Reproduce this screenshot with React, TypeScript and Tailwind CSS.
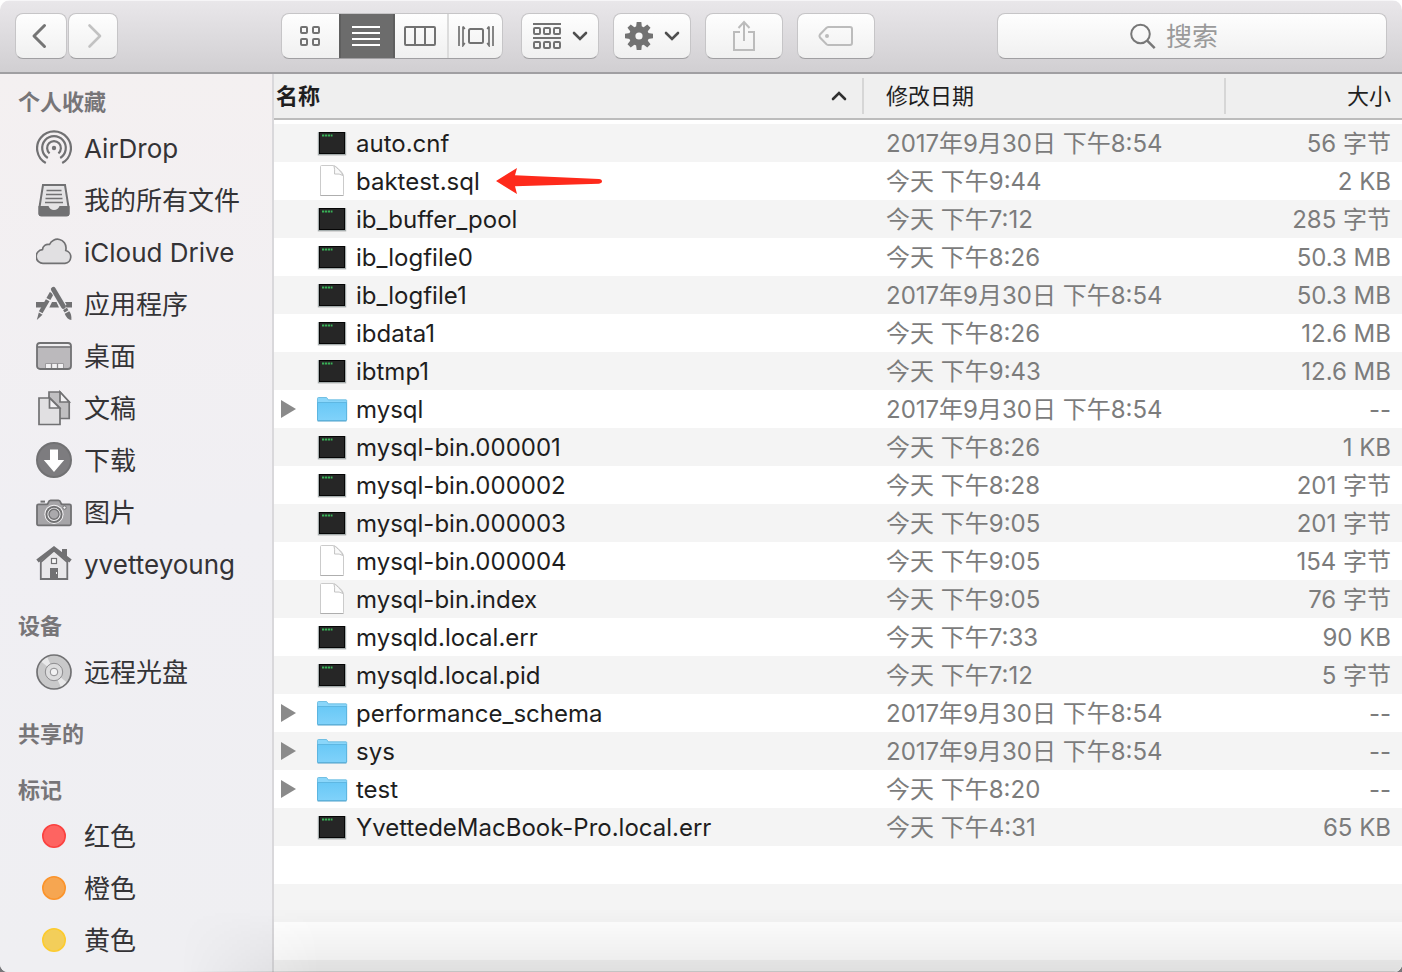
import React from "react";

const SANS = "font-['Inter','Noto_Sans_CJK_SC',sans-serif]";

type Kind = "exec" | "doc" | "folder";
type FileRow = { name: string; date: string; size: string; kind: Kind; marked?: boolean };

const files: FileRow[] = [
  { name: "auto.cnf", date: "2017年9月30日 下午8:54", size: "56 字节", kind: "exec" },
  { name: "baktest.sql", date: "今天 下午9:44", size: "2 KB", kind: "doc", marked: true },
  { name: "ib_buffer_pool", date: "今天 下午7:12", size: "285 字节", kind: "exec" },
  { name: "ib_logfile0", date: "今天 下午8:26", size: "50.3 MB", kind: "exec" },
  { name: "ib_logfile1", date: "2017年9月30日 下午8:54", size: "50.3 MB", kind: "exec" },
  { name: "ibdata1", date: "今天 下午8:26", size: "12.6 MB", kind: "exec" },
  { name: "ibtmp1", date: "今天 下午9:43", size: "12.6 MB", kind: "exec" },
  { name: "mysql", date: "2017年9月30日 下午8:54", size: "--", kind: "folder" },
  { name: "mysql-bin.000001", date: "今天 下午8:26", size: "1 KB", kind: "exec" },
  { name: "mysql-bin.000002", date: "今天 下午8:28", size: "201 字节", kind: "exec" },
  { name: "mysql-bin.000003", date: "今天 下午9:05", size: "201 字节", kind: "exec" },
  { name: "mysql-bin.000004", date: "今天 下午9:05", size: "154 字节", kind: "doc" },
  { name: "mysql-bin.index", date: "今天 下午9:05", size: "76 字节", kind: "doc" },
  { name: "mysqld.local.err", date: "今天 下午7:33", size: "90 KB", kind: "exec" },
  { name: "mysqld.local.pid", date: "今天 下午7:12", size: "5 字节", kind: "exec" },
  { name: "performance_schema", date: "2017年9月30日 下午8:54", size: "--", kind: "folder" },
  { name: "sys", date: "2017年9月30日 下午8:54", size: "--", kind: "folder" },
  { name: "test", date: "今天 下午8:20", size: "--", kind: "folder" },
  { name: "YvettedeMacBook-Pro.local.err", date: "今天 下午4:31", size: "65 KB", kind: "exec" },
];

/* ---------- file icons ---------- */

function FileIcon({ kind }: { kind: Kind }) {
  if (kind === "exec") {
    return (
      <svg width="32" height="32" viewBox="0 0 32 32" className="shrink-0" aria-hidden="true">
        <rect x="1.5" y="5" width="29" height="24" rx="1" fill="#000" opacity="0.12" />
        <rect x="2" y="5" width="28" height="23" fill="#8f9a9a" opacity="0.7" />
        <rect x="3" y="5" width="26" height="22" fill="#060606" />
        <rect x="4" y="6" width="24" height="20" fill="#262626" />
        <path d="M6 8.500h2.300M9 8.500h2.300M12 8.500h2.300M15 8.500h1.500" stroke="#38b257" strokeWidth="2" />
      </svg>
    );
  }
  if (kind === "doc") {
    return (
      <svg width="32" height="32" viewBox="0 0 32 32" className="shrink-0" aria-hidden="true">
        <path d="M4.500 30.500V1.500q0-1 1-1H17q3 .5 5.500 3.500Q27 7.500 27.500 10.500v19q0 1-1 1h-21q-1 0-1-1Z" fill="#fff" stroke="#cbcbcb" />
        <path d="M4.500 30.500h23" stroke="#aaa" strokeWidth="0.900" />
        <path d="M18 1q1 3.500.5 8 5-.6 8.500 1.500-.5-2-4.500-6T18 1Z" fill="#fafafa" stroke="#c4c4c4" strokeLinejoin="round" />
      </svg>
    );
  }
  return (
    <svg width="32" height="32" viewBox="0 0 32 32" className="shrink-0" aria-hidden="true">
      <defs>
        <linearGradient id="folder" x1="0" y1="0" x2="0" y2="1">
          <stop offset="0" stopColor="#69c8f6" />
          <stop offset="1" stopColor="#80d2fa" />
        </linearGradient>
      </defs>
      <path d="M1.500 27V5.500q0-1 1-1H10q1 0 1.500 1l.7 1.300H30q.7 0 .7.700V27Z" fill="#8ad6fa" stroke="#5db5dd" strokeWidth="0.800" />
      <path d="M1.500 9.500h29V27q0 .7-.7.700H2.200q-.7 0-.7-.7Z" fill="url(#folder)" stroke="#57b1dc" strokeWidth="0.800" />
      <path d="M1.500 28h29" stroke="#4a9dc6" strokeWidth="0.800" />
    </svg>
  );
}

function Arrow() {
  return (
    <svg width="106" height="26" viewBox="0 0 106 26" className="ml-4 shrink-0" aria-hidden="true">
      <path d="M0 13 21 0l-2 7.200L103 11q3 .3 3 2.300t-3 2.400L19 18.300 21 26Z" fill="#fe2a1b" />
    </svg>
  );
}

/* ---------- sidebar icons ---------- */

const G = "#717173";

const airdrop = (
  <g fill="none" stroke={G} strokeWidth="2.200">
    <path d="M9.800 33A16.900 16.900 0 1 1 26.200 33" />
    <path d="M11.800 28A11.800 11.800 0 1 1 24.200 28" />
    <path d="M13.600 23.300A6.900 6.900 0 1 1 22.400 23.300" />
    <circle cx="18" cy="18" r="2.200" fill={G} stroke="none" />
  </g>
);

const allFiles = (
  <g>
    <path d="M7 3h22l3.500 22v6.500q0 2-2 2h-25q-2 0-2-2V25Z" fill="#e4e3e5" stroke={G} strokeWidth="2" />
    <path d="M2.500 24h10q1.500 4 5.500 4t5.500-4h10v7.500q0 2.500-2.500 2.500H5q-2.500 0-2.500-2.500Z" fill={G} />
    <path d="M10.500 8.500h15M10 12.500h16M9.500 16.500h17M9 20.500h18" stroke={G} strokeWidth="1.600" />
  </g>
);

const cloud = (
  <path
    d="M7.500 29.300a6.800 6.800 0 0 1-1-13.600A5.600 5.600 0 0 1 13.500 10.500A8.600 8.600 0 0 1 30 14.500q0 1.200-.3 2A6.500 6.500 0 0 1 29 29.300Z"
    fill="#e1e0e2"
    stroke={G}
    strokeWidth="1.700"
    strokeLinejoin="round"
  />
);

const apps = (
  <g>
    <path d="M0 16h9.500l-2.800 5.500H0ZM16 16h4.500L23 21.500h-9.700ZM27.500 16H36v5.500h-5.500Z" fill={G} />
    <path d="m15.800 7-3.400 6" stroke={G} strokeWidth="4.500" />
    <path d="m11.700 14.300-7 12" stroke={G} strokeWidth="4.200" />
    <path d="m6.500 28.800L2.800 26.500 .8 34Z" fill={G} />
    <path d="m17.300 3L27.500 20.500" stroke="#efeef1" strokeWidth="7" />
    <path d="m17.300 3.300L27.500 20.500" stroke={G} strokeWidth="4.800" strokeLinecap="round" />
    <path d="m29 22.800 1.500 2.600" stroke={G} strokeWidth="4.500" />
    <path d="m28.700 27.800 4.500-2.500q2.500 2.500 2.200 8.700-4.500-.5-6.700-6.200Z" fill={G} />
  </g>
);

const desktop = (
  <g>
    <rect x="1" y="5" width="34" height="26" rx="3" fill="#bbb9bc" />
    <path d="M2 8.500V7q0-1.500 1.500-1.500h29Q34 5.500 34 7v1.500Z" fill="#efeef0" />
    <path d="M1 9h34" stroke={G} strokeWidth="1.600" />
    <rect x="1" y="5" width="34" height="26" rx="3" fill="none" stroke={G} strokeWidth="1.800" />
    <path d="M9.500 30v-4.500h18V30" fill="#f2f1f3" stroke="#9c9a9d" />
    <path d="M15.500 25.500V30M21.500 25.500V30" stroke="#8c8a8d" strokeWidth="1.300" />
  </g>
);

const documents = (
  <g stroke={G} strokeWidth="1.700">
    <path d="M13 2h11l9.200 10v16.500H13Z" fill="#c0bfc1" />
    <path d="M24 2v10h9.200Z" fill="#f3f2f4" />
    <path d="M3 8h11l10 10v16.500H3Z" fill="#e1e0e2" />
    <path d="M13.500 8v10h10Z" fill="#f3f2f4" />
  </g>
);

const downloads = (
  <g>
    <circle cx="18" cy="18" r="17" fill="#7d7c7f" stroke={G} strokeWidth="2" />
    <path d="M14 7.500h8V18h6.200L18 30 7.800 18H14Z" fill="#fff" />
  </g>
);

const pictures = (
  <g transform="translate(0 .8)">
    <path d="M4.500 6.800h4.500" stroke={G} strokeWidth="2" />
    <path d="M2.500 9.500h8q1.500 0 2-2 .5-2 2-2h8q1.500 0 2 2t2 2h7q1.500 0 1.500 1.500v18q0 1.500-1.500 1.500h-31Q1 30.500 1 29V11q0-1.500 1.500-1.500Z" fill="#a6a5a8" stroke={G} strokeWidth="1.800" />
    <circle cx="18" cy="19.500" r="9.600" fill="#f4f3f5" />
    <circle cx="18" cy="19.500" r="7.600" fill="#f4f3f5" stroke={G} strokeWidth="2" />
    <circle cx="18" cy="19.500" r="5" fill="#aaa9ac" stroke={G} strokeWidth="1.400" />
    <circle cx="28.500" cy="12.800" r="1.700" fill="#f3f2f4" stroke={G} />
  </g>
);

const home = (
  <g>
    <path d="M26 3h5v9l-5-4Z" fill={G} />
    <path d="M4.800 16v17h26.500V16L18 4.500Z" fill="#e9e8ea" stroke={G} strokeWidth="1.800" />
    <path d="M1.500 15 18 2.500l16.500 12.500" fill="none" stroke={G} strokeWidth="4" />
    <rect x="15.500" y="12.500" width="5" height="5" fill="#fafafa" stroke={G} strokeWidth="1.200" />
    <path d="M14 22h8v12h-8Z" fill={G} />
    <path d="M20.500 26v2" stroke="#eee" />
  </g>
);

const disc = (
  <g>
    <circle cx="18" cy="18" r="17" fill="#c9c9ca" />
    <path d="M18 18 5 7.500A17 17 0 0 1 11 2.800ZM18 18 31 28.500A17 17 0 0 1 25 33.200Z" fill="#e9e9ea" />
    <circle cx="18" cy="18" r="17" fill="none" stroke={G} strokeWidth="1.700" />
    <circle cx="18" cy="18" r="8.700" fill="#dcdcdd" stroke="#8d8c8f" />
    <circle cx="18" cy="18" r="3.800" fill="#f2f2f3" stroke="#8d8c8f" />
  </g>
);

const tag = (fill: string, stroke: string) => <circle cx="18" cy="18" r="11.200" fill={fill} stroke={stroke} strokeWidth="1.600" />;

type Item = { label: string; icon: React.ReactNode };
const sections: { title: string; items: Item[] }[] = [
  {
    title: "个人收藏",
    items: [
      { label: "AirDrop", icon: airdrop },
      { label: "我的所有文件", icon: allFiles },
      { label: "iCloud Drive", icon: cloud },
      { label: "应用程序", icon: apps },
      { label: "桌面", icon: desktop },
      { label: "文稿", icon: documents },
      { label: "下载", icon: downloads },
      { label: "图片", icon: pictures },
      { label: "yvetteyoung", icon: home },
    ],
  },
  { title: "设备", items: [{ label: "远程光盘", icon: disc }] },
  { title: "共享的", items: [] },
  {
    title: "标记",
    items: [
      { label: "红色", icon: tag("#fe6461", "#fb4240") },
      { label: "橙色", icon: tag("#f6a651", "#fb942c") },
      { label: "黄色", icon: tag("#f3ce5a", "#fccb2f") },
    ],
  },
];

function Sidebar() {
  return (
    <nav className="flex w-[274px] shrink-0 flex-col gap-4 overflow-hidden border-r-2 border-[#d9d8db] bg-linear-to-b from-[#f4f0f1] via-[#f0eff3] to-[#efeff2] pt-2">
      {sections.map((s) => (
        <section key={s.title}>
          <h2 className="flex h-10 items-center pl-[18px] text-[22px] font-bold text-[#777578]">{s.title}</h2>
          <ul>
            {s.items.map((it) => (
              <li key={it.label}>
                <a href="#" className="flex h-[52px] items-center gap-3 pl-9 text-[26px] text-[#343336]">
                  <svg width="36" height="36" viewBox="0 0 36 36" className="shrink-0" aria-hidden="true">
                    {it.icon}
                  </svg>
                  <span className="whitespace-nowrap">{it.label}</span>
                </a>
              </li>
            ))}
          </ul>
        </section>
      ))}
    </nav>
  );
}

/* ---------- toolbar ---------- */

const BTN =
  "flex h-[46px] items-center justify-center rounded-lg border border-[#c6c5c7] border-b-[#a09fa2] bg-linear-to-b from-[#fefefe] to-[#f0f0f0]";
const SEG = "flex items-center justify-center";

function Chevron() {
  return (
    <svg width="16" height="12" viewBox="0 0 16 12" fill="none" aria-hidden="true">
      <path d="m2 3 6 6 6-6" stroke="#4f4f4f" strokeWidth="2.600" strokeLinecap="round" />
    </svg>
  );
}

function Toolbar() {
  return (
    <header className="flex h-[74px] shrink-0 items-start border-t border-b-2 border-t-[#f6f5f7] border-b-[#a09fa2] bg-linear-to-b from-[#e9e7ea] to-[#d1cfd2] px-[15px] pt-3">
      <div className="flex gap-px">
        <button aria-label="后退" className={`${BTN} w-[52px]`}>
          <svg width="16" height="26" viewBox="0 0 16 26" fill="none" className="mr-1" aria-hidden="true">
            <path d="M13.500 2.500 3 13l10.500 10.500" stroke="#757575" strokeWidth="3" strokeLinecap="round" strokeLinejoin="round" />
          </svg>
        </button>
        <button aria-label="前进" className={`${BTN} w-[50px]`}>
          <svg width="16" height="26" viewBox="0 0 16 26" fill="none" className="ml-1" aria-hidden="true">
            <path d="M2.500 2.500 13 13 2.500 23.500" stroke="#c2c2c2" strokeWidth="2.600" strokeLinecap="round" strokeLinejoin="round" />
          </svg>
        </button>
      </div>

      <div className="ml-[163px] flex h-[46px] w-[222px] overflow-hidden rounded-lg border border-[#c6c5c7] border-b-[#a09fa2] bg-linear-to-b from-[#fefefe] to-[#f0f0f0]">
        <button aria-label="图标显示" className={`${SEG} w-[57px] pr-0.5`}>
          <svg width="22" height="22" viewBox="0 0 22 22" fill="none" stroke="#727272" strokeWidth="2" aria-hidden="true">
            <rect x="2" y="2" width="6" height="6" rx="1" />
            <rect x="14" y="2" width="6" height="6" rx="1" />
            <rect x="2" y="14" width="6" height="6" rx="1" />
            <rect x="14" y="14" width="6" height="6" rx="1" />
          </svg>
        </button>
        <button aria-label="列表显示" aria-pressed="true" className={`${SEG} -my-px w-14 border-2 border-y-0 border-[#5f5f5f] bg-[#6c6c6c] pr-0.5`}>
          <svg width="28" height="20" viewBox="0 0 28 20" stroke="#fff" strokeWidth="2" aria-hidden="true">
            <path d="M0 1h28M0 7h28M0 13h28M0 19h28" />
          </svg>
        </button>
        <button aria-label="分栏显示" className={`${SEG} w-[54px] border-r-2 border-[#dcdcdc] pr-0.5`}>
          <svg width="32" height="20" viewBox="0 0 32 20" fill="none" stroke="#727272" strokeWidth="2" aria-hidden="true">
            <rect x="1" y="1" width="30" height="18" rx="1" />
            <path d="M11 1v18M21 1v18" />
          </svg>
        </button>
        <button aria-label="Cover Flow" className={`${SEG} flex-1`}>
          <svg width="36" height="22" viewBox="0 0 36 22" fill="none" stroke="#727272" strokeWidth="1.700" aria-hidden="true">
            <path d="M1 1v20M35 1v20" />
            <path d="M5 1.500v19l1.800-2.500M31 1.500v19L29.200 18M5 1.500l1.800 2.500M31 1.500 29.200 4" />
            <rect x="11" y="4" width="14" height="14" rx="1.500" strokeWidth="2" />
          </svg>
        </button>
      </div>

      <div className="ml-[18px] flex gap-3.5">
        <button aria-label="排列" className={`${BTN} w-[78px] gap-2.5`}>
          <svg width="30" height="28" viewBox="0 0 30 28" fill="none" stroke="#727272" strokeWidth="2" aria-hidden="true">
            <path d="M1 2h28M1 16h28" />
            <rect x="2" y="6" width="6" height="6" rx="1" />
            <rect x="12" y="6" width="6" height="6" rx="1" />
            <rect x="22" y="6" width="6" height="6" rx="1" />
            <rect x="2" y="20" width="6" height="6" rx="1" />
            <rect x="12" y="20" width="6" height="6" rx="1" />
            <rect x="22" y="20" width="6" height="6" rx="1" />
          </svg>
          <Chevron />
        </button>
        <button aria-label="操作" className={`${BTN} w-[78px] gap-2.5`}>
          <svg width="30" height="30" viewBox="-15 -15 30 30" aria-hidden="true">
            <circle r="6.800" fill="none" stroke="#727272" strokeWidth="6.400" />
            {[0, 45, 90, 135, 180, 225, 270, 315].map((a) => (
              <path key={a} d="M-2.900-9-2.300-14h4.600L2.900-9Z" fill="#727272" transform={`rotate(${a})`} />
            ))}
          </svg>
          <Chevron />
        </button>
        <button aria-label="共享" className={`${BTN} w-[78px]`}>
          <svg width="24" height="32" viewBox="0 0 24 32" fill="none" stroke="#bcbcbc" strokeWidth="2" aria-hidden="true">
            <path d="M8 12H2v18h20V12h-6M12 21V2M6.500 8 12 2l5.500 6" />
          </svg>
        </button>
        <button aria-label="编辑标记" className={`${BTN} w-[78px]`}>
          <svg width="36" height="22" viewBox="0 0 36 22" fill="none" stroke="#bcbcbc" strokeWidth="2" aria-hidden="true">
            <path d="M10.500 2H32q2 0 2 2v14q0 2-2 2H10.500q-1 0-2-.8L2 12.500q-1-1.500 0-3L8.500 2.800q1-.8 2-.8Z" />
            <circle cx="9" cy="11" r="2" fill="#bcbcbc" stroke="none" />
          </svg>
        </button>
      </div>

      <label className={`${BTN} ml-auto w-[390px] gap-2.5`}>
        <svg width="26" height="26" viewBox="0 0 26 26" fill="none" stroke="#777" strokeWidth="2" aria-hidden="true">
          <circle cx="10.500" cy="11" r="9.300" />
          <path d="m17.200 17.700 7.500 7.500" strokeWidth="2.400" />
        </svg>
        <input type="search" aria-label="搜索" placeholder="搜索" className="w-[88px] bg-transparent text-[26px] text-[#333] outline-none placeholder:text-[#9a9a9a]" />
      </label>
    </header>
  );
}

/* ---------- file list ---------- */

function FileTable() {
  return (
    <table className="w-full table-fixed border-separate border-spacing-0 text-[24px]">
      <colgroup>
        <col />
        <col className="w-[362px]" />
        <col className="w-[176px]" />
      </colgroup>
      <thead>
        <tr className="h-[46px] bg-[#efefef] text-[22px] text-[#1f1f1f]">
          <th scope="col" aria-sort="ascending" className="border-b-2 border-[#bcbcbc] p-0 text-left font-bold">
            <div className="flex h-9 items-center justify-between border-r-2 border-[#d6d6d6] pr-[15px] pl-0.5">
              <span>名称</span>
              <svg width="16" height="12" viewBox="0 0 16 12" fill="none" aria-hidden="true">
                <path d="m2 9 6-6 6 6" stroke="#303030" strokeWidth="2.600" strokeLinecap="round" />
              </svg>
            </div>
          </th>
          <th scope="col" className="border-b-2 border-[#bcbcbc] p-0 text-left font-normal">
            <div className="flex h-9 items-center border-r-2 border-[#d6d6d6] pl-[22px]">修改日期</div>
          </th>
          <th scope="col" className="border-b-2 border-[#bcbcbc] p-0 pr-[11px] text-right font-normal">大小</th>
        </tr>
      </thead>
      <tbody className="before:block before:h-1 before:content-['']">
        {files.map((f) => (
          <tr key={f.name} className="h-[38px] odd:bg-[#f4f4f4] even:bg-white">
            <td className="p-0 text-[#1e1e1e]">
              <div className="flex h-[38px] items-center pl-[7px]">
                <span className="mr-5 flex w-[15px] shrink-0">
                  {f.kind === "folder" && (
                    <button aria-label={`展开 ${f.name}`}>
                      <svg width="15" height="18" viewBox="0 0 15 18" aria-hidden="true">
                        <path d="M0 0v18l15-9Z" fill="#8a8a8a" />
                      </svg>
                    </button>
                  )}
                </span>
                <FileIcon kind={f.kind} />
                <span className="ml-2 pt-0.5 leading-9 whitespace-nowrap">{f.name}</span>
                {f.marked && <Arrow />}
              </div>
            </td>
            <td className="p-0 pt-0.5 pl-[22px] leading-9 whitespace-nowrap text-[#7c7c7c]">{f.date}</td>
            <td className="p-0 pt-0.5 pr-[11px] text-right leading-9 whitespace-nowrap text-[#7c7c7c]">{f.size}</td>
          </tr>
        ))}
      </tbody>
    </table>
  );
}

export default function App() {
  return (
    <div className={`h-screen bg-linear-to-b from-white to-[#77777a] ${SANS}`}>
      <div className="relative flex h-full flex-col overflow-hidden rounded-t-[10px] rounded-b-lg bg-white">
        <Toolbar />
        <div className="flex min-h-0 flex-1">
          <Sidebar />
          <main className="flex min-w-0 flex-1 flex-col overflow-hidden bg-white">
            <FileTable />
            <div className="flex-1 bg-[repeating-linear-gradient(to_bottom,#ffffff_0px,#ffffff_38px,#f4f4f4_38px,#f4f4f4_76px)]" />
          </main>
        </div>
        <div className="pointer-events-none absolute right-0 bottom-0 left-[180px] h-16 border-b border-black/20 bg-linear-to-b from-transparent to-black/8 mask-[linear-gradient(to_right,transparent,black_140px)]" />
      </div>
    </div>
  );
}
